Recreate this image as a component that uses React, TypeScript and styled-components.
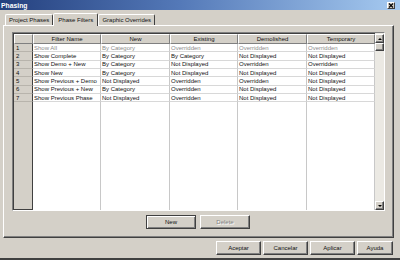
import React from "react";
import styled, { createGlobalStyle, css } from "styled-components";

const FACE = "#d4d0c8";
const SHADOW = "#808080";
const DARK = "#404040";

const GlobalStyle = createGlobalStyle`
  html, body {
    margin: 0;
    padding: 0;
    width: 400px;
    height: 260px;
    overflow: hidden;
    background: ${FACE};
  }
  * { box-sizing: border-box; }
`;

const Window = styled.div`
  width: 400px;
  height: 260px;
  background: ${FACE};
  display: flex;
  flex-direction: column;
  font-family: "Liberation Sans", Arial, sans-serif;
  font-size: 6px;
  color: #111;
  border-bottom: 2px solid ${DARK};
`;

const TitleBar = styled.div`
  height: 10px;
  flex: none;
  display: flex;
  align-items: center;
  justify-content: space-between;
  padding: 0 5px 0 1px;
  background: linear-gradient(90deg, #24407e 0%, #5479b8 45%, #a6caf0 100%);
  color: #fff;
  font-weight: bold;
  font-size: 6.8px;
`;

const CloseBox = styled.div`
  width: 8px;
  height: 7px;
  background: ${FACE};
  border: 1px solid;
  border-color: #fff ${DARK} ${DARK} #fff;
  display: flex;
  align-items: center;
  justify-content: center;
`;

const TabStrip = styled.div`
  display: flex;
  align-items: flex-end;
  height: 15px;
  padding: 0 0 0 5px;
  flex: none;
`;

const Tab = styled.div<{ $active?: boolean }>`
  height: 11px;
  padding: 0 3px;
  display: flex;
  align-items: center;
  border: 1px solid;
  border-bottom: none;
  border-color: #fff ${DARK} transparent #fff;
  border-radius: 2px 2px 0 0;
  white-space: nowrap;
  ${(p) =>
    p.$active &&
    css`
      height: 13px;
      margin-bottom: -1px;
      background: ${FACE};
      position: relative;
      z-index: 1;
      padding: 0 4px;
    `}
`;

const Panel = styled.div`
  margin: 0 6px 0 3px;
  height: 213px;
  flex: none;
  border: 1px solid;
  border-color: #fff ${DARK} ${DARK} #fff;
  box-shadow: inset -1px -1px 0 ${SHADOW};
  padding: 6px 8px 0 8px;
  display: flex;
  flex-direction: column;
`;

const Grid = styled.div`
  width: 373px;
  height: 179px;
  display: flex;
  border: 1px solid;
  border-color: ${SHADOW} #fff #fff ${SHADOW};
  box-shadow: inset 1px 1px 0 ${DARK};
  background: #fff;
`;

const Table = styled.div`
  flex: 1;
  display: flex;
  flex-direction: column;
  padding: 1px 0 0 1px;
`;

const COLS = "19px 68px 69px 68px 69px 68px";

const Row = styled.div<{ $fill?: boolean }>`
  display: grid;
  grid-template-columns: ${COLS};
  height: 8.33px;
  flex: none;
  ${(p) =>
    p.$fill &&
    css`
      flex: 1;
      height: auto;
    `}
`;

const HeaderRow = styled(Row)`
  height: 10px;
`;

const HeadCell = styled.div`
  background: ${FACE};
  border: 1px solid;
  border-color: #fff ${SHADOW} ${SHADOW} #fff;
  display: flex;
  align-items: center;
  justify-content: center;
  white-space: nowrap;
  overflow: hidden;
`;

const RowHead = styled.div<{ $last?: boolean }>`
  background: ${FACE};
  border-right: 1px solid ${DARK};
  border-bottom: 1px solid ${(p) => (p.$last ? DARK : "#b8b4ac")};
  display: flex;
  align-items: center;
  padding-left: 2px;
  line-height: 1;
`;

const Cell = styled.div<{ $muted?: boolean }>`
  border-right: 1px solid #c8c8c8;
  border-bottom: 1px solid #d8d8d8;
  display: flex;
  align-items: center;
  padding-left: 1px;
  white-space: nowrap;
  overflow: hidden;
  line-height: 1;
  color: ${(p) => (p.$muted ? "#8c8c8c" : "#111")};
`;

const FillCell = styled.div`
  border-right: 1px solid #c8c8c8;
`;

const ScrollBar = styled.div`
  width: 10px;
  display: flex;
  flex-direction: column;
  background: #ebe9e3;
  padding-top: 1px;
`;

const ScrollBtn = styled.div`
  width: 9px;
  height: 9px;
  background: ${FACE};
  border: 1px solid;
  border-color: #fff ${DARK} ${DARK} #fff;
  box-shadow: inset -1px -1px 0 ${SHADOW};
  display: flex;
  align-items: center;
  justify-content: center;
  flex: none;
`;

const Thumb = styled(ScrollBtn)`
  height: 8px;
`;

const Track = styled.div`
  flex: 1;
`;

const Arrow = styled.div<{ $down?: boolean }>`
  width: 0;
  height: 0;
  border-left: 2px solid transparent;
  border-right: 2px solid transparent;
  ${(p) =>
    p.$down
      ? css`border-top: 2px solid #000;`
      : css`border-bottom: 2px solid #000;`}
`;

const PanelActions = styled.div`
  display: flex;
  gap: 4px;
  margin: 4px 0 0 134px;
`;

const Button = styled.div<{ $default?: boolean; $disabled?: boolean; $w?: number }>`
  width: ${(p) => p.$w ?? 50}px;
  height: 14px;
  display: flex;
  align-items: center;
  justify-content: center;
  background: ${FACE};
  border: 1px solid;
  border-color: #fff ${DARK} ${DARK} #fff;
  box-shadow: inset -1px -1px 0 ${SHADOW};
  white-space: nowrap;
  ${(p) =>
    p.$default &&
    css`
      border-color: ${DARK};
      box-shadow: inset 1px 1px 0 #fff, inset -1px -1px 0 ${SHADOW};
    `}
  ${(p) =>
    p.$disabled &&
    css`
      color: ${SHADOW};
      text-shadow: 1px 1px 0 #fff;
    `}
`;

const Footer = styled.div`
  display: flex;
  justify-content: flex-end;
  gap: 2px;
  padding: 3px 7px 0 0;
`;

const rows = [
  ["Show All", "By Category", "Overridden", "Overridden", "Overridden"],
  ["Show Complete", "By Category", "By Category", "Not Displayed", "Not Displayed"],
  ["Show Demo + New", "By Category", "Not Displayed", "Overridden", "Overridden"],
  ["Show New", "By Category", "Not Displayed", "Not Displayed", "Not Displayed"],
  ["Show Previous + Demo", "Not Displayed", "Overridden", "Overridden", "Not Displayed"],
  ["Show Previous + New", "By Category", "Overridden", "Not Displayed", "Not Displayed"],
  ["Show Previous Phase", "Not Displayed", "Overridden", "Not Displayed", "Not Displayed"],
];

const headers = ["Filter Name", "New", "Existing", "Demolished", "Temporary"];

export default function App() {
  return (
    <Window>
      <GlobalStyle />
      <TitleBar>
        <span>Phasing</span>
        <CloseBox>
          <svg width="6" height="5" viewBox="0 0 6 5">
            <path d="M1 0.5 L5 4.5 M5 0.5 L1 4.5" stroke="#000" strokeWidth="1.1" />
          </svg>
        </CloseBox>
      </TitleBar>
      <TabStrip>
        <Tab>Project Phases</Tab>
        <Tab $active>Phase Filters</Tab>
        <Tab>Graphic Overrides</Tab>
      </TabStrip>
      <Panel>
        <Grid>
          <Table>
            <HeaderRow>
              <HeadCell />
              {headers.map((h) => (
                <HeadCell key={h}>{h}</HeadCell>
              ))}
            </HeaderRow>
            {rows.map((r, i) => (
              <Row key={i}>
                <RowHead>{i + 1}</RowHead>
                {r.map((v, j) => (
                  <Cell key={j} $muted={i === 0}>
                    {v}
                  </Cell>
                ))}
              </Row>
            ))}
            <Row $fill>
              <RowHead $last />
              {headers.map((h) => (
                <FillCell key={h} />
              ))}
            </Row>
          </Table>
          <ScrollBar>
            <ScrollBtn>
              <Arrow />
            </ScrollBtn>
            <Thumb />
            <Track />
            <ScrollBtn>
              <Arrow $down />
            </ScrollBtn>
          </ScrollBar>
        </Grid>
        <PanelActions>
          <Button $default>New</Button>
          <Button $disabled>Delete</Button>
        </PanelActions>
      </Panel>
      <Footer>
        <Button $w={45}>Aceptar</Button>
        <Button $w={45}>Cancelar</Button>
        <Button $w={45}>Aplicar</Button>
        <Button $w={36}>Ayuda</Button>
      </Footer>
    </Window>
  );
}
